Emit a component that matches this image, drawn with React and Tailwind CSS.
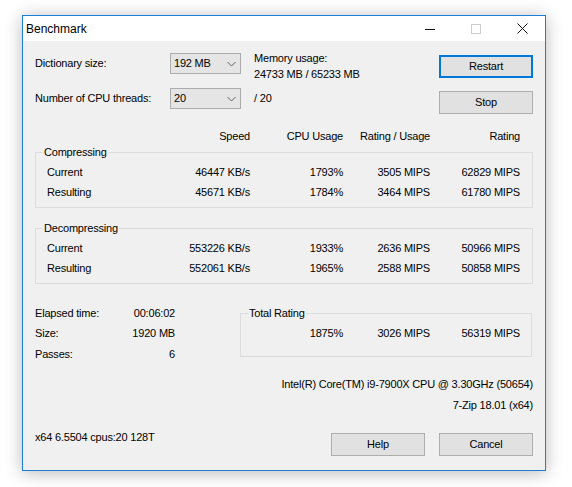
import React from 'react';

const font = { fontFamily: '"Liberation Sans", Arial, sans-serif' };

function Combo({ value }) {
  return (
    <div className="flex items-center justify-between w-[71px] h-[21px] border border-[#acacac] bg-[#e5e5e5] pl-[3px] pr-[4px]">
      <span>{value}</span>
      <svg width="9" height="6" viewBox="0 0 9 6">
        <path d="M0.5 1 L4.5 5 L8.5 1" fill="none" stroke="#606060" strokeWidth="1" />
      </svg>
    </div>
  );
}

function Btn({ children, primary, className = '' }) {
  return (
    <div
      className={
        'flex items-center justify-center w-[94px] h-[23px] bg-[#e1e1e1] ' +
        (primary ? 'border-2 border-[#0078d7] ' : 'border border-[#adadad] ') +
        className
      }
    >
      {children}
    </div>
  );
}

function Group({ label, children, className = '' }) {
  return (
    <div className={'relative border border-[#dcdcdc] ' + className}>
      <span className="absolute -top-[9px] left-[7px] px-[1px] bg-[#f0f0f0] leading-[16px]">{label}</span>
      {children}
    </div>
  );
}

function Row({ label, speed, cpu, ru, rating }) {
  return (
    <div className="flex h-[20px] items-center">
      <div className="w-[214px] flex justify-between pl-[11px]">
        <span>{label}</span>
        <span>{speed}</span>
      </div>
      <div className="w-[93px] text-right">{cpu}</div>
      <div className="w-[87px] text-right">{ru}</div>
      <div className="w-[90px] text-right">{rating}</div>
    </div>
  );
}

export default function App() {
  return (
    <div className="w-[572px] h-[487px] bg-white pl-[22px] pt-[15px] text-[11px] tracking-[-0.2px] text-black" style={font}>
      <div className="w-[524px] h-[456px] border border-[#1c7fd6] bg-[#f0f0f0] flex flex-col shadow-[0_2px_16px_rgba(0,0,0,0.28)]">
        {/* Title bar */}
        <div className="h-[25px] bg-white flex items-center justify-between">
          <span className="pl-[3px] text-[12px] tracking-normal leading-none">Benchmark</span>
          <div className="flex h-full">
            <div className="w-[46px] flex items-center justify-center">
              <svg width="10" height="10" viewBox="0 0 10 10"><path d="M0 5.5 H10" stroke="#111" strokeWidth="1" /></svg>
            </div>
            <div className="w-[46px] flex items-center justify-center">
              <svg width="10" height="10" viewBox="0 0 10 10"><rect x="0.5" y="0.5" width="9" height="9" fill="none" stroke="#cccccc" strokeWidth="1" /></svg>
            </div>
            <div className="w-[46px] flex items-center justify-center">
              <svg width="11" height="11" viewBox="0 0 11 11"><path d="M0.5 0.5 L10.5 10.5 M10.5 0.5 L0.5 10.5" stroke="#111" strokeWidth="1" /></svg>
            </div>
          </div>
        </div>

        <div className="flex-1 flex flex-col px-[12px]">
          {/* Settings */}
          <div className="flex justify-between">
            <div className="flex flex-col gap-[14px] pt-[12px]">
              <div className="flex items-start h-[21px]">
                <span className="w-[135px] leading-[21px]">Dictionary size:</span>
                <Combo value="192 MB" />
                <div className="ml-[13px] -mt-[3px] leading-[16px]">
                  <div>Memory usage:</div>
                  <div>24733 MB / 65233 MB</div>
                </div>
              </div>
              <div className="flex items-center h-[21px]">
                <span className="w-[135px]">Number of CPU threads:</span>
                <Combo value="20" />
                <span className="ml-[13px]">/ 20</span>
              </div>
            </div>
            <div className="flex flex-col gap-[13px] pt-[14px]">
              <Btn primary>Restart</Btn>
              <Btn>Stop</Btn>
            </div>
          </div>

          {/* Header */}
          <div className="flex h-[16px] items-center mt-[14px]">
            <div className="w-[215px] text-right">Speed</div>
            <div className="w-[93px] text-right">CPU Usage</div>
            <div className="w-[87px] text-right">Rating / Usage</div>
            <div className="w-[90px] text-right">Rating</div>
          </div>

          <Group label="Compressing" className="mt-[8px] pt-[9px] pb-[5px]">
            <Row label="Current" speed="46447 KB/s" cpu="1793%" ru="3505 MIPS" rating="62829 MIPS" />
            <Row label="Resulting" speed="45671 KB/s" cpu="1784%" ru="3464 MIPS" rating="61780 MIPS" />
          </Group>

          <Group label="Decompressing" className="mt-[20px] pt-[9px] pb-[5px]">
            <Row label="Current" speed="553226 KB/s" cpu="1933%" ru="2636 MIPS" rating="50966 MIPS" />
            <Row label="Resulting" speed="552061 KB/s" cpu="1965%" ru="2588 MIPS" rating="50858 MIPS" />
          </Group>

          {/* Totals */}
          <div className="flex items-start mt-[19px]">
            <div className="w-[140px]">
              <div className="flex justify-between h-[20px] items-center"><span>Elapsed time:</span><span>00:06:02</span></div>
              <div className="flex justify-between h-[21px] items-center"><span>Size:</span><span>1920 MB</span></div>
              <div className="flex justify-between h-[20px] items-center"><span>Passes:</span><span>6</span></div>
            </div>
            <Group label="Total Rating" className="ml-[65px] mt-[10px] w-[292px] pt-[9px] pb-[13px]">
              <div className="flex h-[20px] items-center">
                <div className="w-[102px] text-right">1875%</div>
                <div className="w-[87px] text-right">3026 MIPS</div>
                <div className="w-[90px] text-right">56319 MIPS</div>
              </div>
            </Group>
          </div>

          <div className="mt-[10px] text-right leading-[21px]">
            <div>Intel(R) Core(TM) i9-7900X CPU @ 3.30GHz (50654)</div>
            <div>7-Zip 18.01 (x64)</div>
          </div>

          {/* Footer */}
          <div className="mt-auto mb-[14px] flex items-start">
            <span className="leading-[16px] -mt-[4px]">x64 6.5504 cpus:20 128T</span>
            <div className="ml-auto flex gap-[14px]">
              <Btn>Help</Btn>
              <Btn>Cancel</Btn>
            </div>
          </div>
        </div>
      </div>
    </div>
  );
}
